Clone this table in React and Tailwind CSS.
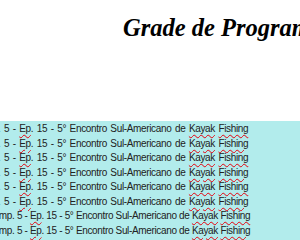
const rows = [true, true, true, true, true, true, false, false];

const Squiggle = ({ children }) => (
  <span className="underline decoration-wavy decoration-red-600 decoration-1 underline-offset-2">
    {children}
  </span>
);

const Row = ({ justified }) => (
  <div
    className={
      justified
        ? "whitespace-nowrap ml-[-25px] [word-spacing:1.1px]"
        : "whitespace-nowrap ml-[-11px]"
    }
  >
    Temp. 5 - <Squiggle>Ep</Squiggle>. 15 - 5° Encontro Sul-Americano de{" "}
    <Squiggle>Kayak</Squiggle> <Squiggle>Fishing</Squiggle>
  </div>
);

export default function App() {
  return (
    <div className="w-[300px] h-[240px] overflow-hidden bg-white">
      {/* Title */}
      <div className="h-[121px] pt-[13px] pl-[123px] whitespace-nowrap">
        <h1 className="font-['Liberation_Serif',serif] font-bold italic text-[24.5px] leading-[30px] text-black">
          Grade de Programação
        </h1>
      </div>

      {/* Schedule rows */}
      <div className="bg-[#b2ecec] h-[119px] pt-[1px] font-['Liberation_Sans',Arial,sans-serif] text-[10px] tracking-[-0.35px] leading-[14.5px] text-[#222]">
        {rows.map((justified, i) => (
          <Row key={i} justified={justified} />
        ))}
      </div>
    </div>
  );
}
